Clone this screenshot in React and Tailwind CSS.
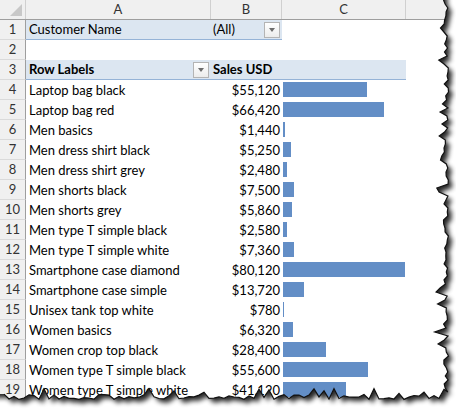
import React from "react";

const rows = [
  ["Laptop bag black", 55120],
  ["Laptop bag red", 66420],
  ["Men basics", 1440],
  ["Men dress shirt black", 5250],
  ["Men dress shirt grey", 2480],
  ["Men shorts black", 7500],
  ["Men shorts grey", 5860],
  ["Men type T simple black", 2580],
  ["Men type T simple white", 7360],
  ["Smartphone case diamond", 80120],
  ["Smartphone case simple", 13720],
  ["Unisex tank top white", 780],
  ["Women basics", 6320],
  ["Women crop top black", 28400],
  ["Women type T simple black", 55600],
  ["Women type T simple white", 41120],
];

const MAX = 80120;

// torn paper edge, fixed seed so it is the same every time
let seed = 11;
const rnd = () => {
  seed = (seed * 16807) % 2147483647;
  return seed / 2147483647;
};

const rightPts = [];
for (let y = 0; y <= 392; y += 4) {
  let x = 446 + (rnd() - 0.5) * 5;
  if (rnd() > 0.82) x -= 4 + rnd() * 5;
  rightPts.push([x, y]);
}
const bottomPts = [];
for (let x = 444; x >= 0; x -= 5) {
  let y = 397 + (rnd() - 0.5) * 5;
  if (rnd() > 0.82) y -= 4 + rnd() * 5;
  bottomPts.push([x, y]);
}
const torn = [...rightPts, ...bottomPts]
  .map(([x, y]) => `${x.toFixed(1)} ${y.toFixed(1)}`)
  .join(" L");
const sheetPath = `M-10 -10 L${rightPts[0][0].toFixed(1)} -10 L${torn} L-10 ${bottomPts[bottomPts.length - 1][1].toFixed(1)} Z`;
const edgeLine = `M${torn}`;

function Dropdown() {
  return (
    <div className="flex h-[16px] w-[16px] items-center justify-center border border-[#b4b4b4] bg-gradient-to-b from-white to-[#ececec]">
      <div className="h-0 w-0 border-x-[3.5px] border-t-[4px] border-x-transparent border-t-[#6d6d6d]" />
    </div>
  );
}

function RowNum({ n }) {
  return (
    <div className="flex h-full w-[26px] shrink-0 items-center justify-center border-b border-r border-b-[#dadada] border-r-[#9e9e9e] bg-[#f0f0f0] text-[#333]">
      {n}
    </div>
  );
}

export default function App() {
  return (
    <div className="relative h-[410px] w-[456px] overflow-hidden whitespace-nowrap bg-white font-['Lato','Liberation_Sans',sans-serif] text-[13px] leading-none text-black">
      {/* column headers */}
      <div className="flex h-[20px] border-b border-[#9e9e9e] bg-[#f0f0f0] text-[#333]">
        <div className="relative w-[26px] shrink-0 border-r border-[#d0d0d0]">
          <div className="absolute bottom-[3px] right-[3px] h-0 w-0 border-b-[12px] border-l-[12px] border-b-[#c8c8c8] border-l-transparent" />
        </div>
        <div className="flex w-[185px] shrink-0 items-center justify-center border-r border-[#d0d0d0]">A</div>
        <div className="flex w-[71px] shrink-0 items-center justify-center border-r border-[#d0d0d0]">B</div>
        <div className="flex w-[124px] shrink-0 items-center justify-center border-r border-[#d0d0d0]">C</div>
        <div className="flex flex-1 items-center justify-center" />
      </div>

      {/* row 1 */}
      <div className="flex h-[20px]">
        <RowNum n={1} />
        <div className="flex h-full w-[256px] items-center border-b border-[#95b3d7] bg-[#dce6f1]">
          <div className="w-[185px] pl-[3px]">Customer Name</div>
          <div className="flex w-[71px] items-center justify-between pl-[2px] pr-[2px]">
            <span>(All)</span>
            <Dropdown />
          </div>
        </div>
      </div>

      {/* row 2 */}
      <div className="flex h-[20px]">
        <RowNum n={2} />
      </div>

      {/* row 3 */}
      <div className="flex h-[20px]">
        <RowNum n={3} />
        <div className="flex h-full w-[380px] items-center border-b border-[#95b3d7] bg-[#dce6f1] font-bold">
          <div className="flex w-[185px] items-center justify-between pl-[3px] pr-[2px]">
            <span>Row Labels</span>
            <Dropdown />
          </div>
          <div className="pl-[2px]">Sales USD</div>
        </div>
      </div>

      {rows.map(([name, value], i) => (
        <div key={name} className="flex h-[20px]">
          <RowNum n={i + 4} />
          <div className="flex h-full w-[185px] shrink-0 items-center pl-[3px]">{name}</div>
          <div className="flex h-full w-[71px] shrink-0 items-center justify-end pr-[2px]">
            ${value.toLocaleString("en-US")}
          </div>
          <div className="flex h-full w-[124px] shrink-0 pb-[3px] pl-[1px] pt-[2px]">
            <div className="h-full bg-[#638ec6]" style={{ width: `${Math.max(1, (value / MAX) * 122)}px` }} />
          </div>
        </div>
      ))}

      {/* torn paper edge */}
      <svg className="pointer-events-none absolute inset-0" width="456" height="410">
        <defs>
          <clipPath id="outside">
            <path d={`M-20 -20 H476 V430 H-20 Z ${sheetPath}`} clipRule="evenodd" />
          </clipPath>
          <filter id="soft" x="-20%" y="-20%" width="140%" height="140%">
            <feGaussianBlur stdDeviation="2.4" />
          </filter>
        </defs>
        <path d={`M-20 -20 H476 V430 H-20 Z ${sheetPath}`} fill="#fff" fillRule="evenodd" />
        <g clipPath="url(#outside)">
          <path d={sheetPath} fill="#000" opacity="0.85" filter="url(#soft)" transform="translate(4 4)" />
        </g>
        <path d={edgeLine} fill="none" stroke="#111" strokeWidth="1.2" />
      </svg>
    </div>
  );
}
